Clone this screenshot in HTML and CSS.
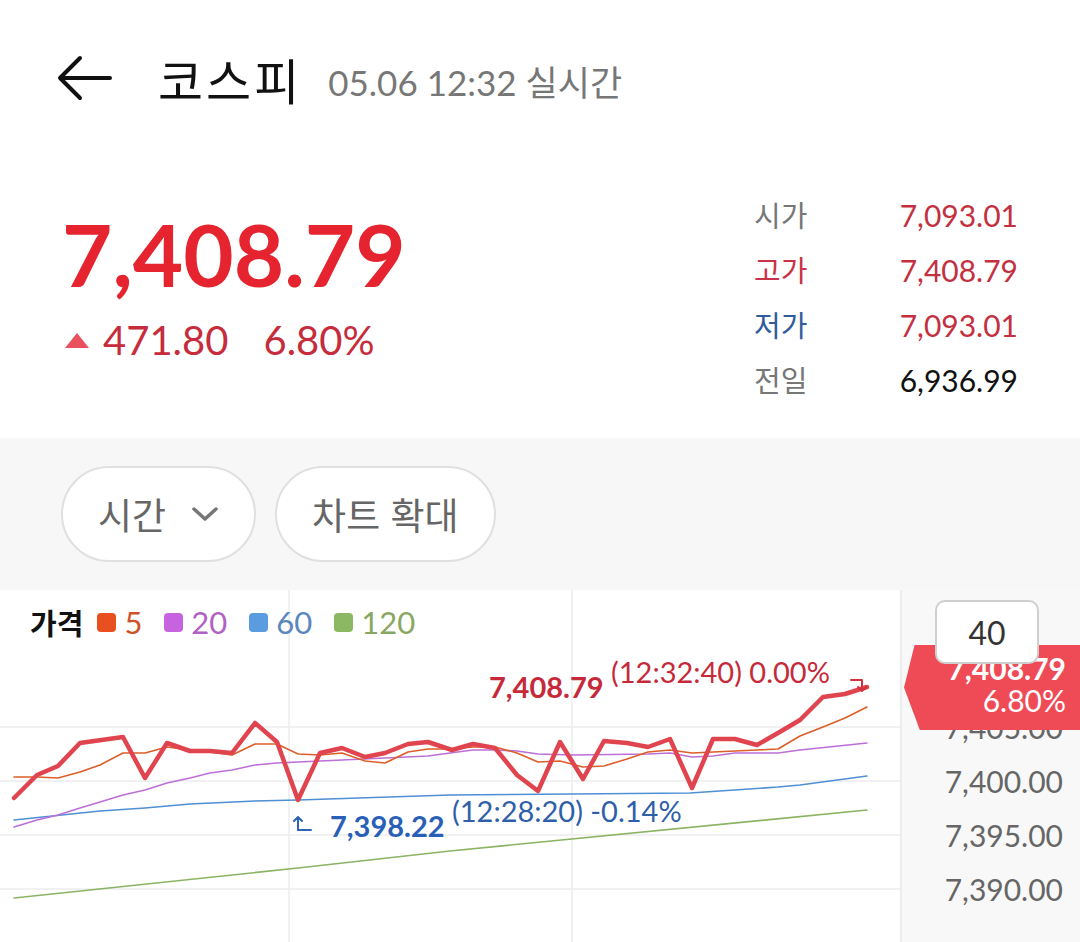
FILE: index.html
```html
<!DOCTYPE html>
<html lang="ko">
<head>
  <meta charset="UTF-8" />
  <title>코스피</title>
  <link rel="stylesheet" href="styles.css">
</head>
<body>

  <header class="top">
    <svg class="back" width="56" height="46" viewBox="0 0 56 46">
      <path d="M54 23 H4 M24 3 L4 23 L24 43" fill="none" stroke="#111" stroke-width="4" stroke-linecap="round" stroke-linejoin="round"/>
    </svg>
    <h1 class="title">코스피</h1>
    <span class="stamp">05.06 12:32 실시간</span>
  </header>

  <section class="quote">
    <div class="now">
      <div class="price">7,408.79</div>
      <div class="change">
        <span class="tri"></span>
        <span>471.80</span>
        <span class="pct">6.80%</span>
      </div>
    </div>

    <div class="stats">
      <div class="row"><span class="lbl">시가</span><span class="val up">7,093.01</span></div>
      <div class="row"><span class="lbl hi">고가</span><span class="val up">7,408.79</span></div>
      <div class="row"><span class="lbl lo">저가</span><span class="val up">7,093.01</span></div>
      <div class="row"><span class="lbl">전일</span><span class="val">6,936.99</span></div>
    </div>
  </section>

  <section class="tools">
    <button class="pill">시간
      <svg class="chev" width="28" height="16" viewBox="0 0 28 16">
        <polyline points="3,3 14,13 25,3" fill="none" stroke="#777" stroke-width="3.5" stroke-linecap="round" stroke-linejoin="round"/>
      </svg>
    </button>
    <button class="pill">차트 확대</button>
  </section>

  <section class="chart">
    <div class="plot">
      <svg class="lines" width="900" height="352" viewBox="0 0 900 352">
        <g stroke="#ececec" stroke-width="1.5">
          <line x1="289" y1="0" x2="289" y2="352"/>
          <line x1="572" y1="0" x2="572" y2="352"/>
          <line x1="0" y1="137" x2="900" y2="137"/>
          <line x1="0" y1="191" x2="900" y2="191"/>
          <line x1="0" y1="245" x2="900" y2="245"/>
          <line x1="0" y1="299" x2="900" y2="299"/>
        </g>
        <g fill="none" stroke-linejoin="round" stroke-linecap="round">
          <!-- 120 -->
          <polyline stroke="#8cb363" stroke-width="1.6" points="14,308 298,278 450,261 867,220"/>
          <!-- 60 -->
          <polyline stroke="#4f8fd3" stroke-width="1.6" points="14,230 100,221 145,218 190,214 255,211 298,210 450,205 573,204 690,203 778,197 800,195 867,186"/>
          <!-- 20 -->
          <polyline stroke="#bd6fd8" stroke-width="1.6" points="14,237 37,230 58,225 80,218 100,212 123,205 145,200 167,193 190,188 210,183 232,180 255,175 277,173 298,172 320,171 342,170 385,168 428,166 450,163 473,160 495,160 517,161 538,164 573,165 648,164 670,163 692,167 713,166 735,163 778,163 800,160 867,153"/>
          <!-- 5 -->
          <polyline stroke="#dc5f2a" stroke-width="1.6" points="14,187 37,187 58,188 80,182 100,175 123,163 145,163 167,157 190,160 210,162 232,165 255,154 277,154 298,164 320,165 342,163 365,171 385,173 408,162 428,159 450,159 473,157 495,157 517,163 538,172 560,171 583,177 604,176 627,169 648,162 670,160 692,163 713,162 735,161 757,160 778,159 800,146 823,137 845,128 867,117"/>
          <!-- price -->
          <polyline stroke="#e0454f" stroke-width="4.5" points="14,208 37,185 58,176 80,153 123,147 145,188 167,153 190,161 210,161 232,163 255,133 277,152 298,210 320,163 342,158 365,167 385,163 408,154 428,152 452,160 473,154 495,158 517,185 538,201 560,152 583,189 604,151 627,153 648,157 670,149 692,198 713,149 735,149 757,155 778,143 800,130 823,107 845,104 867,97"/>
        </g>
      </svg>

      <div class="legend">
        <span class="legend-title">가격</span>
        <span class="key k5"><i></i>5</span>
        <span class="key k20"><i></i>20</span>
        <span class="key k60"><i></i>60</span>
        <span class="key k120"><i></i>120</span>
      </div>

      <div class="mark mark-high">
        <b>7,408.79</b> (12:32:40) 0.00%
        <svg class="hook" width="18" height="16" viewBox="0 0 18 16">
          <path d="M1 3 H12 V14 M8 10 L12 14 L16 10" fill="none" stroke="#d0323f" stroke-width="2" stroke-linecap="round" stroke-linejoin="round"/>
        </svg>
      </div>

      <div class="mark mark-low">
        <svg class="hook" width="20" height="18" viewBox="0 0 20 18">
          <path d="M5 2 V15 H18 M1 6 L5 2 L9 6" fill="none" stroke="#2f63b6" stroke-width="2" stroke-linecap="round" stroke-linejoin="round"/>
        </svg>
        <b>7,398.22</b> (12:28:20) -0.14%
      </div>
    </div>

    <div class="axis">
      <span>7,405.00</span>
      <span>7,400.00</span>
      <span>7,395.00</span>
      <span>7,390.00</span>
      <div class="tag"><b>7,408.79</b><br>6.80%</div>
      <div class="tip">40</div>
    </div>
  </section>

</body>
</html>
```

FILE: styles.css
```css
body {
  margin: 0;
  width: 1080px;
  font-family: Lato, "Noto Sans CJK KR", sans-serif;
  background: #fff;
  color: #111;
}

/* header */
.top {
  height: 156px;
  display: flex;
  align-items: center;
  padding-left: 56px;
  box-sizing: border-box;
}

.back {
  margin-right: 46px;
}

.title {
  margin: 0;
  font-family: "Noto Sans CJK KR", sans-serif;
  font-size: 49px;
  letter-spacing: 3px;
  font-weight: 400;
  color: #111;
}

.stamp {
  margin-left: 26px;
  margin-top: 4px;
  font-size: 35px;
  color: #777;
}

/* quote */
.quote {
  height: 282px;
  display: flex;
  justify-content: space-between;
  padding: 0 62px 0 62px;
  box-sizing: border-box;
}

.now {
  padding-top: 54px;
}

.price {
  font-size: 87px;
  line-height: 88px;
  font-weight: 700;
  color: #e5242f;
}

.change {
  margin-top: 23px;
  display: flex;
  align-items: center;
  font-size: 40px;
  line-height: 38px;
  color: #c62c3c;
}

.tri {
  width: 0;
  height: 0;
  border-left: 12px solid transparent;
  border-right: 12px solid transparent;
  border-bottom: 15px solid #e9515f;
  margin: 0 14px 0 3px;
}

.pct {
  margin-left: 35px;
}

.stats {
  padding-top: 32px;
  width: 264px;
}

.row {
  display: flex;
  justify-content: space-between;
  font-size: 30px;
  line-height: 55px;
}

.lbl {
  font-size: 29px;
  color: #777;
}

.lbl.hi {
  color: #c9334a;
}

.lbl.lo {
  color: #2f5d9c;
}

.val {
  color: #111;
}

.val.up {
  color: #c3303f;
}

/* tool buttons */
.tools {
  height: 152px;
  background: #f7f7f7;
  display: flex;
  align-items: center;
  gap: 19px;
  padding: 0 61px;
}

.pill {
  height: 96px;
  box-sizing: border-box;
  border: 2px solid #e0e0e0;
  border-radius: 48px;
  background: #fff;
  padding: 0 35px;
  display: flex;
  align-items: center;
  gap: 25px;
  font-family: "Noto Sans CJK KR", sans-serif;
  font-size: 37px;
  color: #666;
}

/* chart */
.chart {
  height: 352px;
  display: flex;
}

.plot {
  width: 900px;
  position: relative;
  background: #fff;
}

.lines {
  display: block;
}

.legend {
  position: absolute;
  left: 30px;
  top: 17px;
  display: flex;
  align-items: center;
  gap: 22px;
  font-size: 31px;
  line-height: 30px;
}

.legend-title {
  font-family: "Noto Sans CJK KR", sans-serif;
  font-weight: 700;
  font-size: 29px;
  color: #111;
  margin-right: -8px;
}

.key {
  display: flex;
  align-items: center;
  gap: 8px;
}

.key i {
  width: 19px;
  height: 19px;
  border-radius: 4px;
}

.k5 { color: #cf5329; }
.k5 i { background: #e8501f; }
.k20 { color: #b062c4; }
.k20 i { background: #c863e0; }
.k60 { color: #5b87bf; }
.k60 i { background: #5b9be0; }
.k120 { color: #88a862; }
.k120 i { background: #8cb863; }

.mark {
  position: absolute;
  display: flex;
  align-items: center;
  white-space: pre;
  font-size: 29px;
  line-height: 30px;
}

.mark b {
  font-weight: 700;
}

.mark-high {
  left: 489px;
  top: 67px;
  color: #c62a3a;
}

.mark-high .hook {
  margin-left: 20px;
  margin-top: -4px;
}

.mark-low {
  left: 293px;
  top: 206px;
  color: #2f5fa8;
}

.mark-low b {
  color: #2a5fb8;
}

.mark-low .hook {
  margin-right: 17px;
  margin-top: -4px;
}

.axis {
  flex: 1;
  position: relative;
  background: #f8f8f8;
  border-left: 2px solid #ececec;
  padding: 110px 17px 0 0;
  display: flex;
  flex-direction: column;
  align-items: flex-end;
}

.axis span {
  font-size: 30px;
  line-height: 54px;
  color: #666;
}

.tag {
  position: absolute;
  left: 2px;
  top: 55px;
  width: 176px;
  height: 85px;
  box-sizing: border-box;
  padding: 7px 14px 0 0;
  background: #ef4b57;
  clip-path: polygon(0 50%, 6% 0, 100% 0, 100% 100%, 9% 100%);
  color: #fff;
  text-align: right;
  font-size: 30px;
  line-height: 32px;
}

.tip {
  position: absolute;
  left: 33px;
  top: 10px;
  width: 104px;
  height: 64px;
  box-sizing: border-box;
  border: 2px solid #cfcfcf;
  border-radius: 10px;
  background: #fff;
  display: flex;
  align-items: center;
  justify-content: center;
  font-size: 32px;
  color: #333;
}
```
